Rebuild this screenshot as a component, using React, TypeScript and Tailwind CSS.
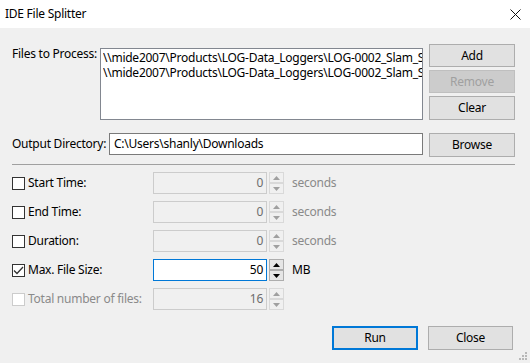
import React from 'react';

const font = { fontFamily: '"Noto Sans", "Open Sans", sans-serif', letterSpacing: '-0.25px' };

function WinButton({ label, disabled = false, primary = false, className = '' }: { label: string; disabled?: boolean; primary?: boolean; className?: string }) {
  const border = primary
    ? 'border-2 border-[#0078d7]'
    : disabled
      ? 'border border-[#bfbfbf]'
      : 'border border-[#adadad]';
  const bg = disabled ? 'bg-[#cccccc] text-[#a0a0a0]' : 'bg-[#e1e1e1] text-black';
  return (
    <div className={`shrink-0 flex items-center justify-center text-[12px] whitespace-nowrap ${border} ${bg} ${className}`}>
      {label}
    </div>
  );
}

function Spinner({ enabled }: { enabled: boolean }) {
  const border = enabled ? 'border-[#adadad]' : 'border-[#d9d9d9]';
  const bg = enabled ? 'bg-[#e5e5e5]' : 'bg-[#f0f0f0]';
  const fill = enabled ? '#000000' : '#a0a0a0';
  return (
    <div className="flex flex-col w-[15px] h-[22px]">
      <div className={`h-[11px] border ${border} ${bg} flex items-center justify-center`}>
        <svg width="7" height="4" viewBox="0 0 7 4"><path d="M3.5 0 L7 4 L0 4 Z" fill={fill} /></svg>
      </div>
      <div className={`h-[11px] border ${border} ${bg} flex items-center justify-center`}>
        <svg width="7" height="4" viewBox="0 0 7 4"><path d="M0 0 L7 0 L3.5 4 Z" fill={fill} /></svg>
      </div>
    </div>
  );
}

interface RowProps {
  label: string;
  value: string;
  unit?: string;
  checked?: boolean;
  active?: boolean;
  disabled?: boolean;
}

function OptionRow({ label, value, unit, checked = false, active = false, disabled = false }: RowProps) {
  return (
    <div className="flex items-center h-[22px]">
      <div className="w-[141px] shrink-0 flex items-center">
        <div className={`w-[13px] h-[13px] shrink-0 border bg-white flex items-center justify-center ${disabled ? 'border-[#cccccc]' : 'border-[#333333]'}`}>
          {checked && (
            <svg width="11" height="9" viewBox="0 0 11 9">
              <path d="M1 4.5 L4 7.5 L10 1" stroke="#333333" strokeWidth="1.3" fill="none" />
            </svg>
          )}
        </div>
        <span className={`ml-[3px] text-[12px] whitespace-nowrap ${disabled ? 'text-[#8a8a8a]' : 'text-black'}`}>{label}</span>
      </div>
      <div
        className={`w-[114px] h-[22px] shrink-0 flex items-center justify-end pr-[3px] text-[12px] border ${
          active ? 'bg-white border-[#0078d7] text-black' : 'bg-[#f0f0f0] border-[#cccccc] text-[#6d6d6d]'
        }`}
      >
        {value}
      </div>
      <div className="ml-[2px]">
        <Spinner enabled={active} />
      </div>
      {unit && (
        <span className={`ml-[8px] text-[12px] ${active ? 'text-black' : 'text-[#8a8a8a]'}`}>{unit}</span>
      )}
    </div>
  );
}

export default function App() {
  const path = '\\\\mide2007\\Products\\LOG-Data_Loggers\\LOG-0002_Slam_S';
  return (
    <div className="relative w-[530px] h-[363px] bg-[#f0f0f0] overflow-hidden text-black" style={font}>
      {/* Title bar */}
      <div className="h-[28px] bg-white flex items-center justify-between pl-[5px] pr-[9px]">
        <span className="text-[12px]">IDE File Splitter</span>
        <svg width="11" height="11" viewBox="0 0 11 11">
          <path d="M0.5 0.5 L10.5 10.5 M10.5 0.5 L0.5 10.5" stroke="#111111" strokeWidth="1" />
        </svg>
      </div>

      <div className="pl-[12px] pr-[15px]">
        {/* Files to process */}
        <div className="flex pt-[16px]">
          <div className="w-[88px] shrink-0 text-[12px] pt-[1px] whitespace-nowrap">Files to Process:</div>
          <div className="mt-[4px] w-[323px] h-[72px] shrink-0 bg-white border border-[#828790] overflow-hidden pl-[2px] pt-[1px] text-[12px] leading-[15px]">
            <div className="whitespace-nowrap overflow-hidden">{path}</div>
            <div className="whitespace-nowrap overflow-hidden">{path}</div>
          </div>
          <div className="ml-[6px] w-[86px] shrink-0 flex flex-col gap-[3px]">
            <WinButton label="Add" className="h-[23px]" />
            <WinButton label="Remove" disabled className="h-[23px]" />
            <WinButton label="Clear" className="h-[24px]" />
          </div>
        </div>

        {/* Output directory */}
        <div className="flex items-start mt-[13px]">
          <div className="w-[97px] shrink-0 h-[22px] flex items-center text-[12px] whitespace-nowrap">Output Directory:</div>
          <div className="w-[314px] shrink-0 h-[22px] bg-white border border-[#7a7a7a] flex items-center pl-[4px] text-[12px] whitespace-nowrap">
            C:\Users\shanly\Downloads
          </div>
          <WinButton label="Browse" className="ml-[6px] w-[86px] h-[24px]" />
        </div>

        {/* Separator */}
        <div className="mt-[7px] h-[1px] bg-[#a0a0a0] w-[503px]" />

        {/* Options */}
        <div className="mt-[7px] flex flex-col gap-[7px]">
          <OptionRow label="Start Time:" value="0" unit="seconds" />
          <OptionRow label="End Time:" value="0" unit="seconds" />
          <OptionRow label="Duration:" value="0" unit="seconds" />
          <OptionRow label="Max. File Size:" value="50" unit="MB" checked active />
          <OptionRow label="Total number of files:" value="16" disabled />
        </div>

        {/* Bottom buttons */}
        <div className="flex justify-end gap-[10px] mt-[16px] pr-[2px]">
          <WinButton label="Run" primary className="w-[86px] h-[24px]" />
          <WinButton label="Close" className="w-[85px] h-[24px]" />
        </div>
      </div>

      {/* Resize grip */}
      <svg className="absolute right-[2px] bottom-[2px]" width="9" height="9" viewBox="0 0 9 9">
        <rect x="6" y="0" width="2" height="2" fill="#b8b8b8" />
        <rect x="3" y="3" width="2" height="2" fill="#b8b8b8" />
        <rect x="6" y="3" width="2" height="2" fill="#b8b8b8" />
        <rect x="0" y="6" width="2" height="2" fill="#b8b8b8" />
        <rect x="3" y="6" width="2" height="2" fill="#b8b8b8" />
        <rect x="6" y="6" width="2" height="2" fill="#b8b8b8" />
      </svg>
    </div>
  );
}
